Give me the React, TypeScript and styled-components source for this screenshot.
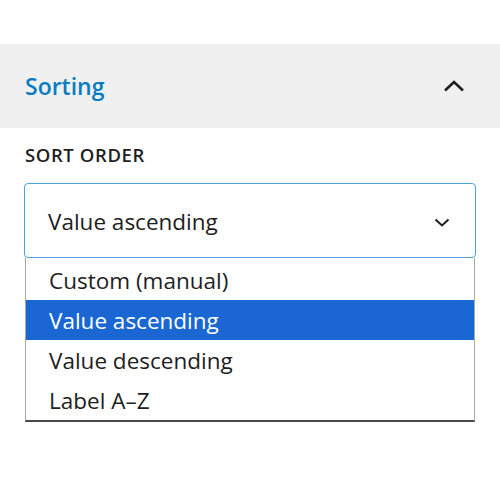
import styled, { createGlobalStyle } from 'styled-components';

const GlobalStyle = createGlobalStyle`
  body {
    margin: 0;
    background: #ffffff;
    font-family: 'Open Sans', 'Noto Sans', sans-serif;
    color: #1e1e1e;
  }
`;

const options = ['Custom (manual)', 'Value ascending', 'Value descending', 'Label A–Z'];

function App() {
  const selected = 'Value ascending';
  return (
    <>
      <GlobalStyle />
      <Page>
        <PanelHeader>
          <PanelTitle>Sorting</PanelTitle>
          <svg width='22' height='12' viewBox='0 0 22 12' fill='none'>
            <path d='M2 10.5 L11 2 L20 10.5' stroke='#1e1e1e' strokeWidth='2.6' />
          </svg>
        </PanelHeader>
        <PanelBody>
          <FieldLabel>SORT ORDER</FieldLabel>
          <SelectWrap>
            <SelectBox>
              <span>{selected}</span>
              <svg width='16' height='9' viewBox='0 0 16 9' fill='none'>
                <path d='M1.5 1.5 L8 7.5 L14.5 1.5' stroke='#1e1e1e' strokeWidth='2' />
              </svg>
            </SelectBox>
            <OptionList>
              {options.map((o) => (
                <Option key={o} $active={o === selected}>
                  {o}
                </Option>
              ))}
            </OptionList>
          </SelectWrap>
        </PanelBody>
      </Page>
    </>
  );
}

export default App;

const Page = styled.div`
  padding-top: 44px;
  width: 500px;
  height: 500px;
  box-sizing: border-box;
`;

const PanelHeader = styled.div`
  height: 84px;
  background: #f0f0f0;
  display: flex;
  align-items: center;
  justify-content: space-between;
  padding: 0 35px 0 25px;
`;

const PanelTitle = styled.h2`
  margin: 0;
  font-size: 23px;
  line-height: 32px;
  font-weight: 600;
  color: #0a7cc1;
`;

const PanelBody = styled.div`
  padding: 15px 24px 0 24px;
`;

const FieldLabel = styled.div`
  font-size: 18.5px;
  font-weight: 600;
  letter-spacing: 0.6px;
  margin-bottom: 16px;
  line-height: 24px;
  padding-left: 1px;
`;

const SelectWrap = styled.div`
  display: flex;
  flex-direction: column;
`;

const SelectBox = styled.div`
  height: 75px;
  box-sizing: border-box;
  border: 1px solid #4da2dc;
  border-radius: 4px;
  display: flex;
  align-items: center;
  justify-content: space-between;
  padding: 3px 25px 0 23px;
  font-size: 22.5px;
  line-height: 30px;
`;

const OptionList = styled.div`
  margin: 0 1px;
  border: 1px solid #a8a8a8;
  border-bottom: 2px solid #4a4a4a;
  border-top: none;
  padding-top: 2px;
`;

const Option = styled.div<{ $active?: boolean }>`
  height: 40px;
  box-sizing: border-box;
  display: flex;
  align-items: center;
  padding: 2px 0 0 23px;
  font-size: 22.5px;
  line-height: 30px;
  background: ${(p) => (p.$active ? '#1a67d3' : '#ffffff')};
  color: ${(p) => (p.$active ? '#ffffff' : '#1e1e1e')};
`;
